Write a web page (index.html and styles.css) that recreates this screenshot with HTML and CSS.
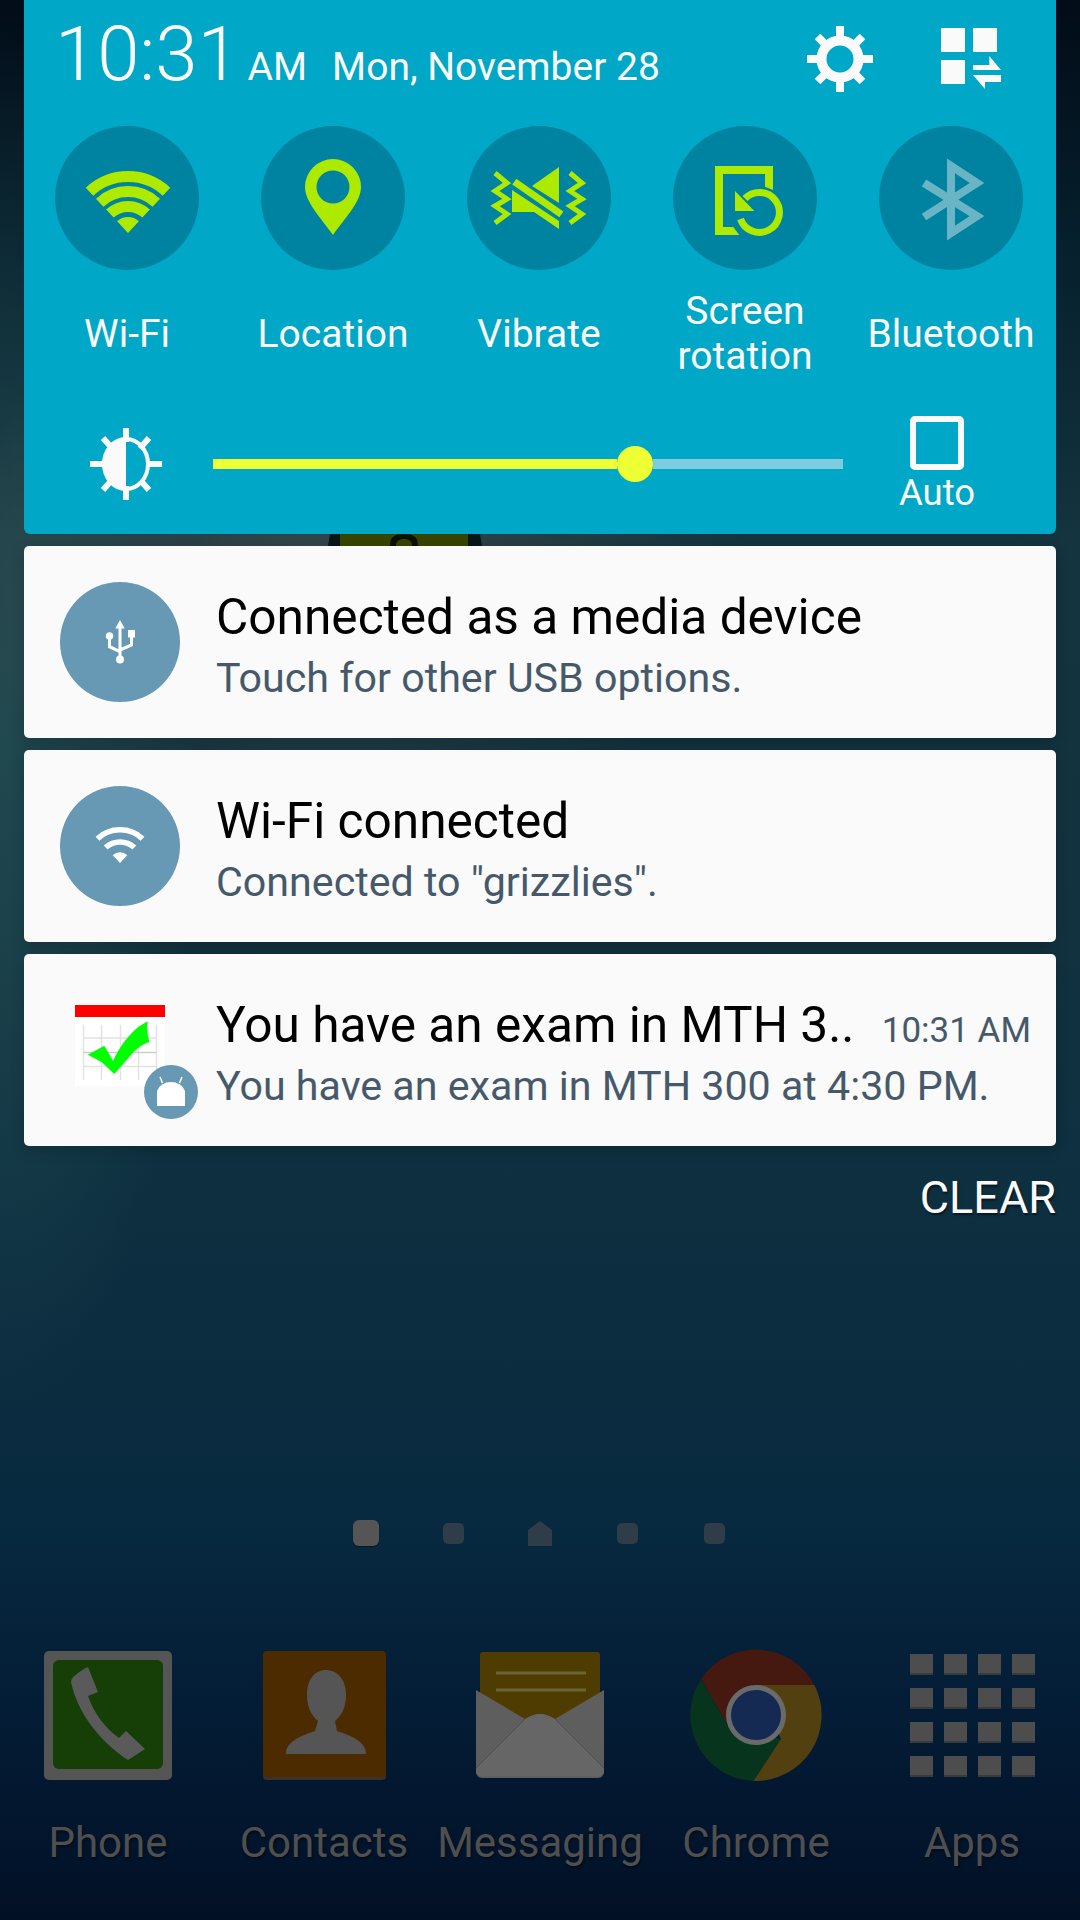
FILE: index.html
```html
<!DOCTYPE html>
<html lang="en">
<head>
    <meta charset="UTF-8">
    <meta name="viewport" content="width=device-width, initial-scale=1.0">
    <title>Notification panel</title>
    <link rel="stylesheet" href="styles.css">
</head>
<body>
<div class="screen">
    <!-- bit of the wallpaper widget showing between the panel and first card -->
    <svg class="wallpaper-ring" width="154" height="12" viewBox="0 0 154 12">
        <path d="M2 0H152L154 12H0Z" fill="#0a1518"/>
        <rect x="12" width="128" height="12" fill="#384400"/>
        <path d="M62 12 C62 3 66 0 76 0 C86 0 90 3 90 12 H84 C84 7 81 5 76 5 C71 5 68 7 68 12 Z" fill="#0a1208"/>
    </svg>

    <section class="panel">
        <header class="panel-top">
            <div class="clock">
                <span class="clock-time">10:31</span>
                <span class="clock-ampm">AM</span>
                <span class="clock-date">Mon, November 28</span>
            </div>
            <svg class="gear" width="66" height="66" viewBox="0 0 66 66">
                <circle cx="33" cy="33" r="18.5" fill="none" stroke="#fafafa" stroke-width="10"/>
                <path d="M33 0V66M0 33H66M10.5 10.5L55.5 55.5M55.5 10.5L10.5 55.5" stroke="#fafafa" stroke-width="8" stroke-dasharray="16 34 16"/>
            </svg>
            <svg class="tiles" width="60" height="61" viewBox="0 0 60 61">
                <path d="M0 0H24V24H0ZM32 0H56V24H32ZM0 32H24V56H0Z" fill="#fafafa"/>
                <path d="M32 37H48.3V28L60 42H32ZM60 47V54H44V61L32 47Z" fill="#fafafa"/>
            </svg>
        </header>

        <div class="toggles">
            <div class="toggle">
                <svg class="toggle-icon" width="144" height="144" viewBox="0 0 144 144">
                    <circle cx="72" cy="72" r="72" fill="#0083a0"/>
                    <g fill="none" stroke="#aeea00" stroke-width="11">
                        <path d="M34.5 65.7A56.5 56.5 0 0 1 111.5 65.7"/>
                        <path d="M44.7 76.7A41.5 41.5 0 0 1 101.3 76.7"/>
                        <path d="M54.9 87.6A26.5 26.5 0 0 1 91.1 87.6"/>
                    </g>
                    <path d="M73 107L62.1 95.3A16 16 0 0 1 83.9 95.3Z" fill="#aeea00"/>
                </svg>
                <div class="toggle-label">Wi-Fi</div>
            </div>
            <div class="toggle">
                <svg class="toggle-icon" width="144" height="144" viewBox="0 0 144 144">
                    <circle cx="72" cy="72" r="72" fill="#0083a0"/>
                    <path fill-rule="evenodd" fill="#aeea00" d="M72 109C60 92 44 76 44 61A28 28 0 0 1 100 61C100 76 84 92 72 109ZM72 44.500A16.500 16.500 0 1 0 72 77.500A16.500 16.500 0 1 0 72 44.500Z"/>
                </svg>
                <div class="toggle-label">Location</div>
            </div>
            <div class="toggle">
                <svg class="toggle-icon" width="144" height="144" viewBox="0 0 144 144">
                    <circle cx="72" cy="72" r="72" fill="#0083a0"/>
                    <g fill="#aeea00">
                        <path d="M65 60L92 41V77Z"/>
                        <path d="M45 64L92 95V103L67 86H45Z"/>
                    </g>
                    <path d="M47.300 55.700L94.400 88.300" stroke="#aeea00" stroke-width="7"/>
                    <g fill="none" stroke="#aeea00" stroke-width="5">
                        <path d="M28 47L40 57L28 65L40 73L28 80L40 88L28 97"/>
                        <path d="M103 47L115 57L103 65L115 73L103 80L115 88L103 97"/>
                    </g>
                </svg>
                <div class="toggle-label">Vibrate</div>
            </div>
            <div class="toggle">
                <svg class="toggle-icon" width="144" height="144" viewBox="0 0 144 144">
                    <circle cx="72" cy="72" r="72" fill="#0083a0"/>
                    <path fill="#aeea00" d="M42 40H100V64L92 60.700V48H50V101H60.300L66.300 109H42Z"/>
                    <path fill="none" stroke="#aeea00" stroke-width="7" d="M72 72.500A20 20 0 1 1 67.500 93"/>
                    <path fill="#aeea00" d="M62 65V85H81.300Z"/>
                </svg>
                <div class="toggle-label">Screen<br>rotation</div>
            </div>
            <div class="toggle">
                <svg class="toggle-icon" width="144" height="144" viewBox="0 0 144 144">
                    <circle cx="72" cy="72" r="72" fill="#0083a0"/>
                    <path fill="none" stroke="#6ab4c6" stroke-width="8" d="M45 57L98 90L72 107V40L98 57L45 91"/>
                </svg>
                <div class="toggle-label">Bluetooth</div>
            </div>
        </div>

        <div class="brightness">
            <svg class="sun" width="72" height="72" viewBox="0 0 72 72">
                <path d="M36 0V72M0 36H72M13 10L59 62M59 10L13 62" stroke="#fafafa" stroke-width="6" stroke-dasharray="14 44 14"/>
                <ellipse cx="36" cy="36" rx="22" ry="25" fill="none" stroke="#fafafa" stroke-width="4"/>
                <path d="M36 11A22 25 0 0 0 36 61Z" fill="#fafafa"/>
            </svg>
            <div class="slider">
                <div class="slider-fill"></div>
                <div class="slider-thumb"></div>
                <div class="slider-rest"></div>
            </div>
            <div class="auto">
                <div class="auto-box"></div>
                <div class="auto-label">Auto</div>
            </div>
        </div>
    </section>

    <section class="cards">
        <div class="card">
            <div class="card-icon">
                <svg width="120" height="120" viewBox="0 0 120 120">
                    <circle cx="60" cy="60" r="60" fill="#6899b4"/>
                    <path d="M60 38L64.700 46.500H55.300Z" fill="#fff"/>
                    <path d="M60 45V78M49.500 57V64.700L60 69.700M71.500 55V63L60 68" fill="none" stroke="#fff" stroke-width="3"/>
                    <circle cx="60" cy="77.500" r="4" fill="#fff"/>
                    <circle cx="49.500" cy="54" r="3.700" fill="#fff"/>
                    <rect x="68" y="48" width="7" height="7.500" fill="#fff"/>
                </svg>
            </div>
            <div class="card-body">
                <div class="card-title">Connected as a media device</div>
                <div class="card-sub">Touch for other USB options.</div>
            </div>
        </div>
        <div class="card">
            <div class="card-icon">
                <svg width="120" height="120" viewBox="0 0 120 120">
                    <circle cx="60" cy="60" r="60" fill="#6899b4"/>
                    <g fill="none" stroke="#fff" stroke-width="5.500">
                        <path d="M37.500 52.700A33 33 0 0 1 82.500 52.700"/>
                        <path d="M45.700 61.500A21 21 0 0 1 74.300 61.500"/>
                    </g>
                    <path d="M60 77L52.700 69.200A10.700 10.700 0 0 1 67.300 69.200Z" fill="#fff"/>
                </svg>
            </div>
            <div class="card-body">
                <div class="card-title">Wi-Fi connected</div>
                <div class="card-sub">Connected to "grizzlies".</div>
            </div>
        </div>
        <div class="card">
            <div class="card-icon exam-icon">
                <svg width="90" height="81" viewBox="0 0 90 81">
                    <rect width="90" height="81" fill="#fff"/>
                    <rect width="90" height="12" fill="#f00"/>
                    <path d="M8.500 20V75M26.500 20V75M45.500 20V75M63.500 20V75M81.500 20V75M8.500 33H81.500M8.500 61.500H81.500" stroke="#e2e2e2" stroke-width="1.500"/>
                    <path d="M8.500 47.500H81.500" stroke="#ccc" stroke-width="1.500"/>
                    <path fill="#0f0" d="M12.800 49.700L29.300 40.700L38 55.700C43 46 47 39 52.400 33C58 26 65 20 73 16.300C72 20 71.500 23 72.400 26.300C72.600 30 73.500 33 74.400 37C68 39 64 42 59.300 46.300L39.300 69L26.600 57Z"/>
                </svg>
                <svg class="exam-badge" width="54" height="54" viewBox="0 0 54 54">
                    <circle cx="27" cy="27" r="27" fill="#6899b4"/>
                    <path d="M13 41V26A14.500 12 0 0 1 41 26V41Z" fill="#fff"/>
                    <path d="M16 12L18.500 18M38 12L35.500 18" stroke="#fff" stroke-width="1.500"/>
                </svg>
            </div>
            <div class="card-body">
                <div class="card-head">
                    <div class="card-title">You have an exam in MTH 3..</div>
                    <div class="card-time">10:31 AM</div>
                </div>
                <div class="card-sub">You have an exam in MTH 300 at 4:30 PM.</div>
            </div>
        </div>
    </section>

    <div class="clear-row">CLEAR</div>

    <div class="dots">
        <div class="dot-cell"><div class="dot dot-active"></div></div>
        <div class="dot-cell"><div class="dot"></div></div>
        <div class="dot-cell">
            <svg width="24" height="25" viewBox="0 0 24 25"><path d="M12 0L24 9V25H0V9Z" fill="#2f3d48"/></svg>
        </div>
        <div class="dot-cell"><div class="dot"></div></div>
        <div class="dot-cell"><div class="dot"></div></div>
    </div>

    <nav class="dock">
        <div class="app">
            <div class="app-icon">
                <div class="phone-tile">
                    <svg width="110" height="109" viewBox="9 9 110 109">
                        <path fill="#5a5a5a" d="M44 16L54 41L44 45C50 62 60 76 75 87L82 80L101 98L84 109C58 92 34 64 27 31C27 26 36 20 44 16Z"/>
                    </svg>
                </div>
            </div>
            <div class="app-label">Phone</div>
        </div>
        <div class="app">
            <div class="app-icon">
                <div class="contact-tile">
                    <svg width="123" height="126" viewBox="0 0 123 126">
                        <path fill="#555" d="M23 103C23 92 34 86 52 80L55 70C48 64 44 56 44 44C44 28 52 19 63 19C74 19 83 28 83 44C83 56 79 64 72 70L74 80C92 86 103 92 103 103Z"/>
                    </svg>
                </div>
            </div>
            <div class="app-label">Contacts</div>
        </div>
        <div class="app">
            <div class="app-icon">
                <svg width="128" height="127" viewBox="0 0 128 127">
                    <path fill="#4f3c00" d="M4 3A3 3 0 0 1 7 0H121A3 3 0 0 1 124 3V70H4Z"/>
                    <path d="M20 21H110M20 38H110" stroke="#6c6436" stroke-width="3"/>
                    <path fill="#5e5e5e" d="M0 38L49 67C54 64 59 62 64 62C69 62 74 64 79 67L128 38V120A6 6 0 0 1 122 126H6A6 6 0 0 1 0 120Z"/>
                    <path fill="#666" d="M0 116L49 67C54 64 59 62 64 62C69 62 74 64 79 67L128 116V120A6 6 0 0 1 122 124H6A6 6 0 0 1 0 120Z"/>
                    <path d="M0 116L49 67M128 116L79 67" stroke="#4c4c4c" stroke-width="1"/>
                </svg>
            </div>
            <div class="app-label">Messaging</div>
        </div>
        <div class="app">
            <div class="app-icon">
                <svg width="132" height="132" viewBox="0 0 132 132">
                    <path fill="#451810" d="M66 36H124.400A66 66 0 0 0 11 30L38 77Z"/>
                    <path fill="#07341c" d="M11 30A66 66 0 0 0 63.500 132L91 90L38 77Z"/>
                    <path fill="#524010" d="M66 36H124.400A66 66 0 0 1 63.500 132L91 90Z"/>
                    <circle cx="66" cy="66" r="27.500" fill="#152a52" stroke="#6a6a6a" stroke-width="5"/>
                </svg>
            </div>
            <div class="app-label">Chrome</div>
        </div>
        <div class="app">
            <div class="app-icon">
                <div class="apps-grid">
                    <i></i><i></i><i></i><i></i>
                    <i></i><i></i><i></i><i></i>
                    <i></i><i></i><i></i><i></i>
                    <i></i><i></i><i></i><i></i>
                </div>
            </div>
            <div class="app-label">Apps</div>
        </div>
    </nav>
</div>
</body>
</html>
```

FILE: styles.css
```css
* {
    box-sizing: border-box;
}
body {
    margin: 0;
    font-family: Roboto, "Noto Sans", sans-serif;
    background-color: #061c30;
}
.screen {
    position: relative;
    width: 1080px;
    height: 1920px;
    overflow: hidden;
    display: flex;
    flex-direction: column;
    background:
        radial-gradient(ellipse 420px 260px at 330px 570px, rgba(90, 90, 84, 0.5), rgba(90, 90, 84, 0) 100%),
        radial-gradient(ellipse 200px 700px at 0 720px, rgba(50, 100, 100, 0.45), rgba(50, 100, 100, 0) 100%),
        linear-gradient(to bottom, #020c18 0, #06202d 250px, #14343f 540px, #12323f 900px, #0e3040 1150px, #0b2b3f 1400px, #072a40 1520px, #041d36 1700px, #02142b 1860px, #021024 1920px);
}
.wallpaper-ring {
    position: absolute;
    left: 328px;
    top: 534px;
}

/* quick panel */
.panel {
    position: relative;
    margin: 0 24px;
    height: 534px;
    background-color: #00a7c6;
    border-radius: 0 0 6px 6px;
    color: #fafafa;
}
.panel-top {
    height: 126px;
    display: flex;
    align-items: flex-start;
    padding-left: 31px;
}
.clock {
    display: flex;
    align-items: baseline;
    padding-top: 16px;
    width: 752px;
}
.clock-time {
    font-size: 76px;
    font-weight: 300;
    line-height: 76px;
}
.clock-ampm {
    font-size: 39px;
    margin-left: 8px;
}
.clock-date {
    font-size: 39px;
    margin-left: 25px;
}
.gear {
    margin-top: 26px;
}
.tiles {
    margin-top: 28px;
    margin-left: 68px;
}
.toggles {
    display: grid;
    grid-template-columns: repeat(5, 206px);
}
.toggle {
    display: flex;
    flex-direction: column;
    align-items: center;
}
.toggle-icon {
    display: block;
}
.toggle-label {
    height: 88px;
    margin-top: 20px;
    display: flex;
    align-items: center;
    text-align: center;
    font-size: 39px;
    line-height: 45px;
}
.brightness {
    display: flex;
    align-items: center;
    height: 100px;
    margin-top: 28px;
    padding-left: 66px;
}
.sun {
    display: block;
    margin-top: 16px;
}
.slider {
    width: 630px;
    height: 36px;
    margin-left: 51px;
    margin-top: 16px;
    display: flex;
    align-items: center;
}
.slider-fill {
    width: 404px;
    height: 10px;
    background-color: #eeff33;
}
.slider-thumb {
    width: 36px;
    height: 36px;
    border-radius: 50%;
    background-color: #eeff33;
}
.slider-rest {
    flex: 1;
    height: 10px;
    background-color: #7fcbe0;
}
.auto {
    width: 74px;
    margin-left: 57px;
    margin-top: 18px;
    display: flex;
    flex-direction: column;
    align-items: center;
}
.auto-box {
    width: 54px;
    height: 54px;
    flex: none;
    border: 6px solid #fafafa;
    border-radius: 5px;
}
.auto-label {
    font-size: 36.5px;
    line-height: 42px;
    margin-top: 2px;
}

/* notifications */
.cards {
    position: relative;
    margin: 12px 24px 0;
    display: flex;
    flex-direction: column;
    gap: 12px;
}
.card {
    height: 192px;
    display: flex;
    align-items: center;
    padding-left: 36px;
    padding-right: 25px;
    background-color: #fafafa;
    border-radius: 5px;
    box-shadow: 0 4px 14px rgba(0, 0, 0, 0.18);
}
.card-icon {
    width: 120px;
    height: 120px;
    flex: none;
}
.card-icon svg {
    display: block;
}
.exam-icon {
    position: relative;
    padding: 15px 0 0 15px;
}
.exam-badge {
    position: absolute;
    left: 84px;
    top: 75px;
}
.card-body {
    flex: 1;
    min-width: 0;
    margin-left: 36px;
    padding-top: 10px;
}
.card-head {
    display: flex;
    align-items: baseline;
    justify-content: space-between;
}
.card-title {
    font-size: 49.6px;
    line-height: 58px;
    color: #000;
    white-space: nowrap;
}
.card-sub {
    font-size: 41.2px;
    line-height: 58px;
    margin-top: 3px;
    color: #46596b;
    white-space: nowrap;
}
.card-time {
    font-size: 35px;
    color: #46596b;
}
.clear-row {
    margin: 26px 24px 0;
    text-align: right;
    font-size: 45px;
    line-height: 52px;
    color: #fafafa;
    text-shadow: 1px 2px 2px rgba(0, 0, 0, 0.5);
}

/* home screen behind the panel, dimmed */
.dots {
    display: flex;
    justify-content: center;
    margin-top: 296px;
    height: 26px;
}
.dot-cell {
    width: 87px;
    display: flex;
    align-items: center;
    justify-content: center;
}
.dot {
    width: 21px;
    height: 21px;
    border-radius: 5px;
    background-color: #2f3d48;
}
.dot-active {
    width: 26px;
    height: 26px;
    border-radius: 6px;
    background-color: #555;
    box-shadow: 0 1px 1px rgba(0, 0, 0, 0.4);
}
.dock {
    display: grid;
    grid-template-columns: repeat(5, 216px);
    margin-top: 101px;
}
.app {
    display: flex;
    flex-direction: column;
    align-items: center;
}
.app-icon {
    height: 136px;
    display: flex;
    align-items: center;
    justify-content: center;
}
.app-label {
    margin-top: 36px;
    font-size: 42px;
    line-height: 48px;
    color: #4f4f4f;
    text-shadow: 1px 2px 2px rgba(0, 0, 0, 0.4);
    white-space: nowrap;
}
.phone-tile {
    width: 128px;
    height: 129px;
    padding: 9px;
    background-color: #555;
    border-radius: 5px;
}
.phone-tile svg {
    display: block;
    background-color: #163f08;
    border-radius: 6px;
}
.contact-tile {
    width: 123px;
    height: 129px;
    background-color: #4d2b00;
    border-bottom: 3px solid #3a3128;
    border-radius: 4px;
}
.contact-tile svg {
    display: block;
}
.apps-grid {
    display: grid;
    grid-template-columns: repeat(4, 23px);
    grid-auto-rows: 21px;
    gap: 13px 11px;
}
.apps-grid i {
    background-color: #4d4d4d;
    border-bottom: 2px solid #3a3a3a;
}
```
